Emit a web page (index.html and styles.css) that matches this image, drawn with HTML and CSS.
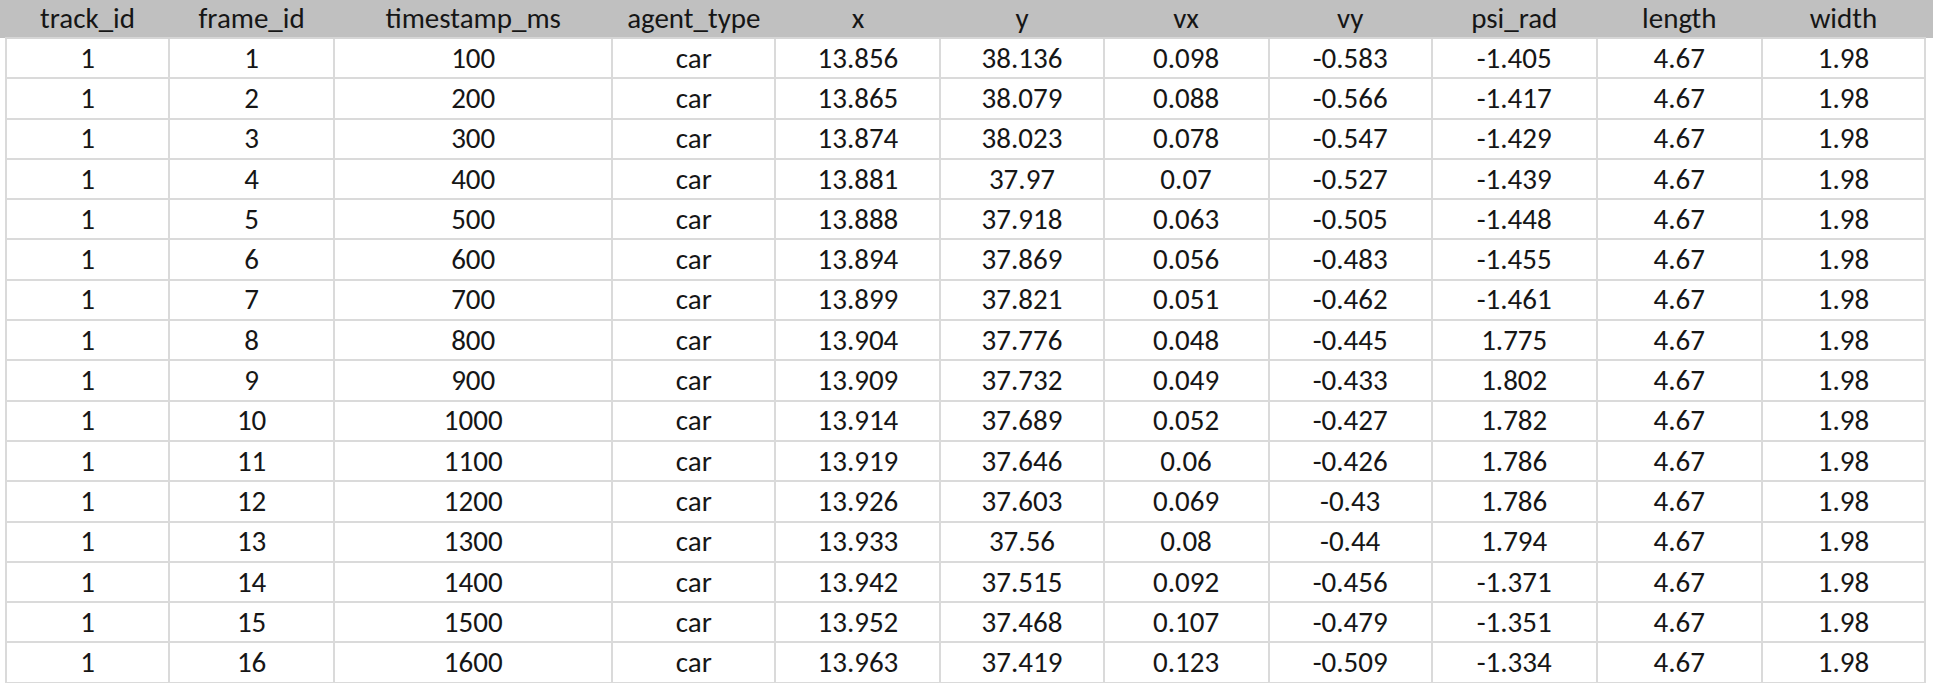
FILE: index.html
```html
<!DOCTYPE html>
<html>
<head>
<meta charset="utf-8">
<link rel="stylesheet" href="styles.css">
</head>
<body>
<div class="sheet">
<table class="grid">
<colgroup>
<col class="c-n"><col class="c-n2"><col class="c-ts"><col class="c-n"><col class="c-n2"><col class="c-n"><col class="c-n2"><col class="c-n"><col class="c-n2"><col class="c-n2"><col class="c-n">
</colgroup>
<thead>
<tr><th>track_id</th><th>frame_id</th><th>timestamp_ms</th><th>agent_type</th><th>x</th><th>y</th><th>vx</th><th>vy</th><th>psi_rad</th><th>length</th><th>width</th></tr>
</thead>
<tbody>
<tr><td>1</td><td>1</td><td>100</td><td>car</td><td>13.856</td><td>38.136</td><td>0.098</td><td>-0.583</td><td>-1.405</td><td>4.67</td><td>1.98</td></tr>
<tr><td>1</td><td>2</td><td>200</td><td>car</td><td>13.865</td><td>38.079</td><td>0.088</td><td>-0.566</td><td>-1.417</td><td>4.67</td><td>1.98</td></tr>
<tr><td>1</td><td>3</td><td>300</td><td>car</td><td>13.874</td><td>38.023</td><td>0.078</td><td>-0.547</td><td>-1.429</td><td>4.67</td><td>1.98</td></tr>
<tr><td>1</td><td>4</td><td>400</td><td>car</td><td>13.881</td><td>37.97</td><td>0.07</td><td>-0.527</td><td>-1.439</td><td>4.67</td><td>1.98</td></tr>
<tr><td>1</td><td>5</td><td>500</td><td>car</td><td>13.888</td><td>37.918</td><td>0.063</td><td>-0.505</td><td>-1.448</td><td>4.67</td><td>1.98</td></tr>
<tr><td>1</td><td>6</td><td>600</td><td>car</td><td>13.894</td><td>37.869</td><td>0.056</td><td>-0.483</td><td>-1.455</td><td>4.67</td><td>1.98</td></tr>
<tr><td>1</td><td>7</td><td>700</td><td>car</td><td>13.899</td><td>37.821</td><td>0.051</td><td>-0.462</td><td>-1.461</td><td>4.67</td><td>1.98</td></tr>
<tr><td>1</td><td>8</td><td>800</td><td>car</td><td>13.904</td><td>37.776</td><td>0.048</td><td>-0.445</td><td>1.775</td><td>4.67</td><td>1.98</td></tr>
<tr><td>1</td><td>9</td><td>900</td><td>car</td><td>13.909</td><td>37.732</td><td>0.049</td><td>-0.433</td><td>1.802</td><td>4.67</td><td>1.98</td></tr>
<tr><td>1</td><td>10</td><td>1000</td><td>car</td><td>13.914</td><td>37.689</td><td>0.052</td><td>-0.427</td><td>1.782</td><td>4.67</td><td>1.98</td></tr>
<tr><td>1</td><td>11</td><td>1100</td><td>car</td><td>13.919</td><td>37.646</td><td>0.06</td><td>-0.426</td><td>1.786</td><td>4.67</td><td>1.98</td></tr>
<tr><td>1</td><td>12</td><td>1200</td><td>car</td><td>13.926</td><td>37.603</td><td>0.069</td><td>-0.43</td><td>1.786</td><td>4.67</td><td>1.98</td></tr>
<tr><td>1</td><td>13</td><td>1300</td><td>car</td><td>13.933</td><td>37.56</td><td>0.08</td><td>-0.44</td><td>1.794</td><td>4.67</td><td>1.98</td></tr>
<tr><td>1</td><td>14</td><td>1400</td><td>car</td><td>13.942</td><td>37.515</td><td>0.092</td><td>-0.456</td><td>-1.371</td><td>4.67</td><td>1.98</td></tr>
<tr><td>1</td><td>15</td><td>1500</td><td>car</td><td>13.952</td><td>37.468</td><td>0.107</td><td>-0.479</td><td>-1.351</td><td>4.67</td><td>1.98</td></tr>
<tr><td>1</td><td>16</td><td>1600</td><td>car</td><td>13.963</td><td>37.419</td><td>0.123</td><td>-0.509</td><td>-1.334</td><td>4.67</td><td>1.98</td></tr>
</tbody>
</table>
</div>
</body>
</html>
```
FILE: styles.css
```css
html, body {
  margin: 0;
  padding: 0;
  background: #ffffff;
}
.sheet {
  width: 1933px;
  height: 683px;
  overflow: hidden;
  background: linear-gradient(#c0c0c0 0, #c0c0c0 38px, #ffffff 38px);
  padding-left: 5px;
  box-sizing: border-box;
}
.grid {
  border-collapse: collapse;
  table-layout: fixed;
  width: 1921px;
  font-family: Carlito, Calibri, Lato, "Open Sans", sans-serif;
  font-size: 29px;
  color: #161616;
}
.c-n { width: 163px; }
.c-n2 { width: 165px; }
.c-ts { width: 278px; }
.grid th {
  height: 37px;
  padding: 0;
  font-weight: 400;
  text-align: center;
  background: #c0c0c0;
  border-left: 2px solid #c0c0c0;
  border-right: 2px solid #c0c0c0;
  border-bottom: 2px solid #d6d6d6;
  line-height: 1;
}
.grid td {
  height: 38.3px;
  padding: 0;
  text-align: center;
  border: 2px solid #dadada;
  line-height: 1;
}
.grid tbody tr:first-child td {
  border-top-color: #d6d6d6;
}
```
